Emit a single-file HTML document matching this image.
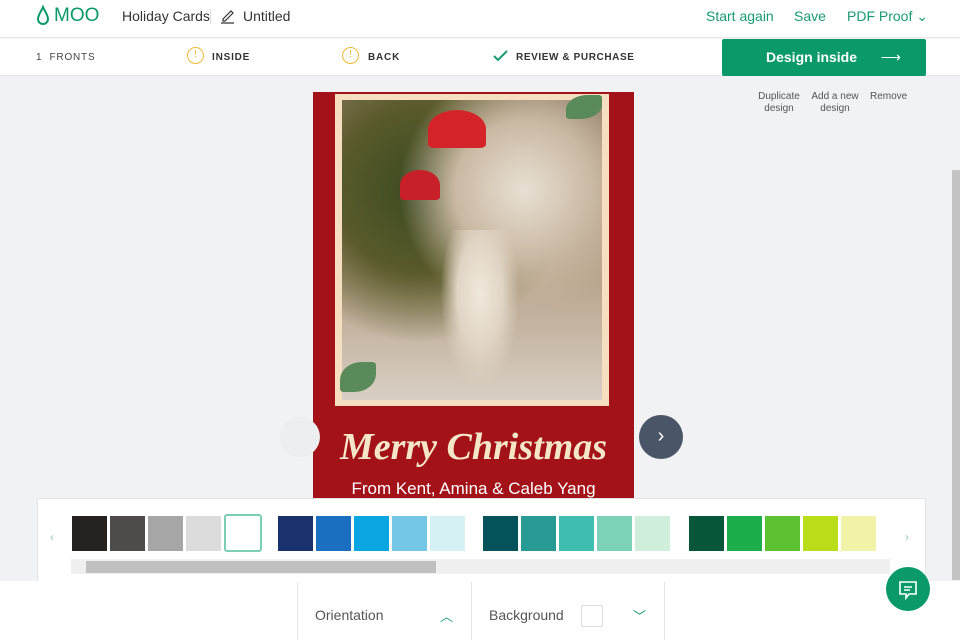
<!DOCTYPE html>
<html><head><meta charset="utf-8"><style>
*{margin:0;padding:0;box-sizing:border-box}
body{width:960px;height:640px;overflow:hidden;background:#f1f2f4;font-family:"Liberation Sans",sans-serif;position:relative}
.a{position:absolute}
.g{color:#1a9a72}
</style></head><body>
<div class="a" style="left:0;top:0;width:960px;height:38px;background:#fff;border-bottom:1px solid #e8e8e8"></div>
<svg class="a" style="left:36px;top:5px" width="14" height="22" viewBox="0 0 14 22"><path d="M7 2C5 7 2 10 2 14a5 5 0 0 0 10 0C12 10 9 7 7 2z" fill="none" stroke="#0a9a6a" stroke-width="2"/></svg>
<div class="a" style="left:54px;top:5px;font-size:19px;color:#0a9a6a">MOO</div>
<div class="a" style="left:122px;top:8px;font-size:14px;color:#333">Holiday Cards</div>
<div class="a" style="left:210px;top:9px;width:1px;height:15px;background:#ddd"></div>
<svg class="a" style="left:220px;top:8px" width="15" height="16" viewBox="0 0 15 16"><path d="M3 11 11 3l2 2-8 8H3z M1 15h13" fill="none" stroke="#333" stroke-width="1.2"/></svg>
<div class="a" style="left:243px;top:8px;font-size:14px;color:#333">Untitled</div>
<div class="a g" style="left:706px;top:8px;font-size:14px">Start again</div>
<div class="a g" style="left:794px;top:8px;font-size:14px">Save</div>
<div class="a g" style="left:847px;top:8px;font-size:14px">PDF Proof ⌄</div>
<div class="a" style="left:0;top:39px;width:960px;height:37px;background:#fff;border-bottom:1px solid #e2e4e8"></div>
<div class="a" style="left:36px;top:52px;font-size:10px;color:#444;letter-spacing:.8px">1 &nbsp;FRONTS</div>
<div class="a" style="left:187px;top:47px;width:17px;height:17px;border:1.5px solid #f0b93a;border-radius:50%;color:#f0b93a;font-size:10px;text-align:center;line-height:14px">!</div>
<div class="a" style="left:212px;top:52px;font-size:10px;color:#333;letter-spacing:.8px;font-weight:bold">INSIDE</div>
<div class="a" style="left:342px;top:47px;width:17px;height:17px;border:1.5px solid #f0b93a;border-radius:50%;color:#f0b93a;font-size:10px;text-align:center;line-height:14px">!</div>
<div class="a" style="left:368px;top:52px;font-size:10px;color:#333;letter-spacing:.8px;font-weight:bold">BACK</div>
<svg class="a" style="left:493px;top:50px" width="15" height="12"><path d="M1 6l4 4 9-9" fill="none" stroke="#1a9a72" stroke-width="2"/></svg>
<div class="a" style="left:516px;top:52px;font-size:10px;color:#333;letter-spacing:.6px;font-weight:bold">REVIEW &amp; PURCHASE</div>
<div class="a" style="left:722px;top:39px;width:204px;height:37px;background:#0a9a6a;border-radius:2px;color:#fff;font-size:14px;font-weight:bold;line-height:36px;padding-left:44px">Design inside <span style="margin-left:20px;font-weight:normal">⟶</span></div>
<div class="a" style="left:756px;top:91px;font-size:10px;color:#555;text-align:center;width:46px;line-height:12px">Duplicate design</div>
<div class="a" style="left:808px;top:91px;font-size:10px;color:#555;text-align:center;width:54px;line-height:12px">Add a new design</div>
<div class="a" style="left:870px;top:91px;font-size:10px;color:#555">Remove</div>
<div class="a" style="left:952px;top:170px;width:8px;height:410px;background:#c4c4c4"></div>
<!-- card -->
<div class="a" style="left:313px;top:92px;width:321px;height:410px;background:#a31218"></div>
<div class="a" style="left:335px;top:94px;width:274px;height:312px;background:#f5dfc0"></div>
<div class="a" style="left:342px;top:100px;width:260px;height:300px;background:radial-gradient(circle at 70% 30%,#e8e0d4 0,#c9b8a2 25%,transparent 45%),radial-gradient(circle at 30% 30%,#3a4a22 0,#5a5a2a 30%,transparent 55%),linear-gradient(180deg,#8c7a66,#b8a48c 60%,#d8cfc4)"></div>
<div class="a" style="left:440px;top:230px;width:80px;height:160px;background:radial-gradient(ellipse at 50% 40%,#f0e8dc 0,#e0d4c4 40%,transparent 70%)"></div>
<div class="a" style="left:428px;top:110px;width:58px;height:38px;background:#d4242a;border-radius:50% 50% 10% 10%"></div>
<div class="a" style="left:400px;top:170px;width:40px;height:30px;background:#c82028;border-radius:50% 50% 10% 10%"></div>
<div class="a" style="left:566px;top:95px;width:36px;height:24px;background:#5a8a5a;border-radius:60% 10%"></div>
<div class="a" style="left:340px;top:362px;width:36px;height:30px;background:#5a8a5a;border-radius:60% 10%"></div>
<div class="a" style="left:313px;top:425px;width:321px;text-align:center;font-family:'Liberation Serif',serif;font-style:italic;font-weight:bold;font-size:38px;color:#f5e6c8">Merry Christmas</div>
<div class="a" style="left:313px;top:479px;width:321px;text-align:center;font-size:17px;color:#fff">From Kent, Amina &amp; Caleb Yang</div>
<div class="a" style="left:639px;top:415px;width:44px;height:44px;border-radius:50%;background:#4a5568;color:#fff;font-size:20px;text-align:center;line-height:42px">›</div>
<div class="a" style="left:280px;top:417px;width:40px;height:40px;border-radius:50%;background:#eceef0"></div>
<!-- swatches panel -->
<div class="a" style="left:37px;top:498px;width:889px;height:84px;background:#fff;border:1px solid #e4e4e4"></div>
<div class="a" style="left:50px;top:530px;color:#9cc;font-size:12px">‹</div>
<div class="a" style="left:905px;top:530px;color:#9cc;font-size:12px">›</div>
<div class="a" style="left:72px;top:516px;display:flex;gap:3px">
<div style="width:35px;height:35px;background:#252220"></div><div style="width:35px;height:35px;background:#4d4c4b"></div><div style="width:35px;height:35px;background:#a6a6a6"></div><div style="width:35px;height:35px;background:#dcdcdc"></div><div style="width:38px;height:38px;margin-top:-2px;border:2px solid #7bcfb5;border-radius:3px;background:#fff"></div></div>
<div class="a" style="left:278px;top:516px;display:flex;gap:3px">
<div style="width:35px;height:35px;background:#19326e"></div><div style="width:35px;height:35px;background:#1a6fc0"></div><div style="width:35px;height:35px;background:#0aa6e2"></div><div style="width:35px;height:35px;background:#74c6e6"></div><div style="width:35px;height:35px;background:#d6f1f3"></div></div>
<div class="a" style="left:483px;top:516px;display:flex;gap:3px">
<div style="width:35px;height:35px;background:#05535a"></div><div style="width:35px;height:35px;background:#289c94"></div><div style="width:35px;height:35px;background:#3fbdb1"></div><div style="width:35px;height:35px;background:#7cd2b8"></div><div style="width:35px;height:35px;background:#cfeedb"></div></div>
<div class="a" style="left:689px;top:516px;display:flex;gap:3px">
<div style="width:35px;height:35px;background:#08563a"></div><div style="width:35px;height:35px;background:#1bae4a"></div><div style="width:35px;height:35px;background:#5cc232"></div><div style="width:35px;height:35px;background:#b9dd18"></div><div style="width:35px;height:35px;background:#f0f3a8"></div></div>
<div class="a" style="left:71px;top:559px;width:819px;height:15px;background:#f0f0f0"></div>
<div class="a" style="left:86px;top:561px;width:350px;height:12px;background:#c0c0c0"></div>
<!-- bottom -->
<div class="a" style="left:0;top:581px;width:960px;height:59px;background:#fff"></div>
<div class="a" style="left:297px;top:582px;width:1px;height:58px;background:#e4e4e4"></div>
<div class="a" style="left:471px;top:582px;width:1px;height:58px;background:#e4e4e4"></div>
<div class="a" style="left:664px;top:582px;width:1px;height:58px;background:#e4e4e4"></div>
<div class="a" style="left:315px;top:607px;font-size:14px;color:#555">Orientation</div>
<div class="a g" style="left:440px;top:606px;font-size:13px">︿</div>
<div class="a" style="left:489px;top:607px;font-size:14px;color:#555">Background</div>
<div class="a" style="left:581px;top:605px;width:22px;height:22px;border:1px solid #ddd;border-radius:2px"></div>
<div class="a g" style="left:633px;top:606px;font-size:13px">﹀</div>
<div class="a" style="left:886px;top:567px;width:44px;height:44px;border-radius:50%;background:#0a9a6a"></div>
<svg class="a" style="left:897px;top:579px" width="22" height="22" viewBox="0 0 22 22"><path d="M3 3h16v12H12l-3 4v-4H3z M7 8h8M7 11h6" fill="none" stroke="#fff" stroke-width="1.6"/></svg>
</body></html>
